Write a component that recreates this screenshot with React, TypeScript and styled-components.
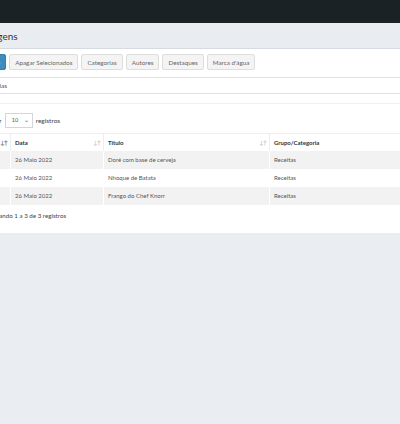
import styled, { createGlobalStyle } from 'styled-components';

const GlobalStyle = createGlobalStyle`
  html, body {
    margin: 0;
    padding: 0;
    background: #eaedf2;
    font-family: Lato, "Liberation Sans", sans-serif;
  }
`;

const Viewport = styled.div`
  width: 400px;
  height: 424px;
  overflow: hidden;
  background: #eaedf2;
`;

const TopBar = styled.div`
  height: 23px;
  background: #1b2226;
`;

const Shift = styled.div`
  margin-left: -40px;
  width: 470px;
`;

const TitleBar = styled.div`
  height: 26px;
  box-sizing: border-box;
  background: #e9edf2;
  border-bottom: 1px solid #d6dbe1;
  display: flex;
  align-items: center;
  padding-left: 13px;
  font-size: 10px;
  color: #333;
`;

const Card = styled.div`
  background: #fff;
  height: 184px;
  box-sizing: border-box;
  padding-top: 5px;
`;

const Toolbar = styled.div`
  display: flex;
  gap: 3px;
  padding-left: 14px;
  height: 16px;
`;

const Btn = styled.div<{ $primary?: boolean }>`
  height: 16px;
  box-sizing: border-box;
  padding: 0 5px;
  display: flex;
  align-items: center;
  font-size: 6.3px;
  color: ${(p) => (p.$primary ? '#fff' : '#666')};
  background: ${(p) => (p.$primary ? '#3c8dbc' : '#f4f4f4')};
  border: 1px solid ${(p) => (p.$primary ? '#367fa9' : '#ddd')};
  border-radius: 2px;
  white-space: nowrap;
`;

const Filter = styled.div`
  margin-top: 7px;
  height: 17px;
  box-sizing: border-box;
  border-top: 1px solid #e2e2e2;
  border-bottom: 1px solid #e2e2e2;
  display: flex;
  align-items: center;
  padding-left: 1px;
  font-size: 6.5px;
  color: #555;
`;

const Divider = styled.div`
  margin-top: 9px;
  height: 1px;
  background: #f0f0f0;
`;

const LengthRow = styled.div`
  margin-top: 8px;
  height: 16px;
  display: flex;
  align-items: center;
  gap: 3px;
  padding-left: 19px;
  font-size: 6.5px;
  color: #444;
`;

const Select = styled.div`
  width: 28px;
  height: 15px;
  box-sizing: border-box;
  border: 1px solid #d2d6de;
  display: flex;
  align-items: center;
  justify-content: space-between;
  padding: 0 3px 0 6px;
  font-size: 5.5px;
  color: #555;
`;

const Table = styled.table`
  margin-top: 5px;
  width: 100%;
  border-collapse: collapse;
  font-size: 6px;
  color: #555;
  table-layout: fixed;
`;

const Th = styled.th<{ $w: number }>`
  box-sizing: border-box;
  width: ${(p) => p.$w}px;
  height: 17px;
  padding: 0 4px;
  text-align: left;
  font-weight: 700;
  color: #333;
  border-top: 1px solid #eee;
  border-left: 1px solid #eee;
  position: relative;
  &:first-child {
    border-left: none;
  }
`;

const SortIcon = styled.span<{ $active?: boolean }>`
  position: absolute;
  right: 3px;
  top: 5px;
  font-size: 6px;
  letter-spacing: -1px;
  color: ${(p) => (p.$active ? '#777' : '#ccc')};
`;

const Tr = styled.tr<{ $striped?: boolean }>`
  background: ${(p) => (p.$striped ? '#f2f2f2' : '#fff')};
`;

const Td = styled.td`
  height: 18px;
  padding: 0 4px;
  border-left: 1px solid transparent;
  white-space: nowrap;
  overflow: hidden;
`;

const Info = styled.div`
  margin-top: 7px;
  padding-left: 23px;
  font-size: 6.2px;
  color: #444;
`;

const rows = [
  { id: 3, date: '26 Maio 2022', title: 'Doré com base de cerveja', cat: 'Receitas' },
  { id: 2, date: '26 Maio 2022', title: 'Nhoque de Batata', cat: 'Receitas' },
  { id: 1, date: '26 Maio 2022', title: 'Frango do Chef Knorr', cat: 'Receitas' },
];

export default function App() {
  return (
    <>
      <GlobalStyle />
      <Viewport>
        <TopBar />
        <Shift>
          <TitleBar>Postagens</TitleBar>
          <Card>
            <Toolbar>
              <Btn $primary>+ Novo</Btn>
              <Btn>Apagar Selecionados</Btn>
              <Btn>Categorias</Btn>
              <Btn>Autores</Btn>
              <Btn>Destaques</Btn>
              <Btn>Marca d'água</Btn>
            </Toolbar>
            <Filter>Todas as tabelas</Filter>
            <Divider />
            <LengthRow>
              Mostrar
              <Select>
                10 <span>⌄</span>
              </Select>
              registros
            </LengthRow>
            <Table>
              <thead>
                <tr>
                  <Th $w={50}>
                    ID<SortIcon $active>↓↑</SortIcon>
                  </Th>
                  <Th $w={93}>
                    Data<SortIcon>↓↑</SortIcon>
                  </Th>
                  <Th $w={166}>
                    Título<SortIcon>↓↑</SortIcon>
                  </Th>
                  <Th $w={161}>
                    Grupo/Categoria<SortIcon>↓↑</SortIcon>
                  </Th>
                </tr>
              </thead>
              <tbody>
                {rows.map((r, i) => (
                  <Tr key={r.id} $striped={i % 2 === 0}>
                    <Td>{r.id}</Td>
                    <Td>{r.date}</Td>
                    <Td>{r.title}</Td>
                    <Td>{r.cat}</Td>
                  </Tr>
                ))}
              </tbody>
            </Table>
            <Info>Mostrando 1 a 3 de 3 registros</Info>
          </Card>
        </Shift>
      </Viewport>
    </>
  );
}
